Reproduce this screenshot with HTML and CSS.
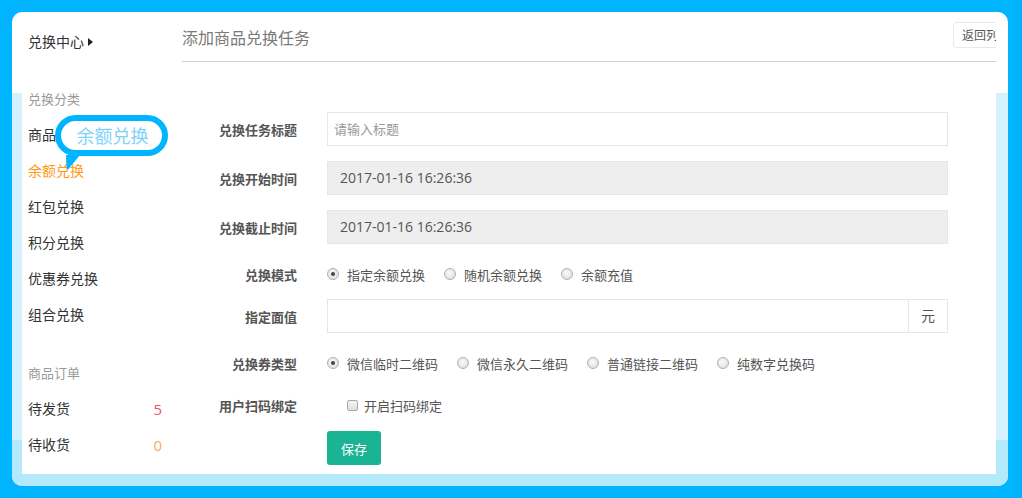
FILE: index.html
```html
<!DOCTYPE html>
<html lang="zh-CN">
<head>
<meta charset="utf-8">
<title>添加商品兑换任务</title>
<link rel="stylesheet" href="styles.css">
</head>
<body>
<div class="card">
  <header class="header">
    <div class="crumb">兑换中心<span class="caret"></span></div>
    <div class="head-main">
      <div class="title-row">
        <h1 class="title">添加商品兑换任务</h1>
        <button class="back-btn" type="button">返回列表</button>
      </div>
    </div>
  </header>
  <div class="body">
    <div class="panel">
      <aside class="sidebar">
        <div class="side-title">兑换分类</div>
        <ul class="side-list">
          <li class="side-item">商品兑换</li>
          <li class="side-item active">余额兑换</li>
          <li class="side-item">红包兑换</li>
          <li class="side-item">积分兑换</li>
          <li class="side-item">优惠券兑换</li>
          <li class="side-item">组合兑换</li>
        </ul>
        <div class="side-title orders">商品订单</div>
        <ul class="side-list">
          <li class="side-item count-row"><span>待发货</span><span class="count red">5</span></li>
          <li class="side-item count-row"><span>待收货</span><span class="count orange">0</span></li>
        </ul>
        <div class="bubble">
          <span class="bubble-text">余额兑换</span>
          <svg class="bubble-tail" width="18" height="16" viewBox="0 0 18 16"><path d="M2 0 L2.5 13 Q3 15 5 13.5 L16 0 Z" fill="#00b4ff"/></svg>
        </div>
      </aside>
      <main class="form">
        <div class="row r1">
          <label class="lbl">兑换任务标题</label>
          <div class="field"><div class="input placeholder">请输入标题</div></div>
        </div>
        <div class="row r2">
          <label class="lbl">兑换开始时间</label>
          <div class="field"><div class="input disabled">2017-01-16 16:26:36</div></div>
        </div>
        <div class="row r3">
          <label class="lbl">兑换截止时间</label>
          <div class="field"><div class="input disabled">2017-01-16 16:26:36</div></div>
        </div>
        <div class="row r4">
          <label class="lbl">兑换模式</label>
          <div class="field radios">
            <span class="opt"><i class="radio on"></i>指定余额兑换</span>
            <span class="opt"><i class="radio"></i>随机余额兑换</span>
            <span class="opt"><i class="radio"></i>余额充值</span>
          </div>
        </div>
        <div class="row r5">
          <label class="lbl">指定面值</label>
          <div class="field"><div class="input-group"><div class="input grow"></div><div class="addon">元</div></div></div>
        </div>
        <div class="row r6">
          <label class="lbl">兑换券类型</label>
          <div class="field radios">
            <span class="opt"><i class="radio on"></i>微信临时二维码</span>
            <span class="opt"><i class="radio"></i>微信永久二维码</span>
            <span class="opt"><i class="radio"></i>普通链接二维码</span>
            <span class="opt"><i class="radio"></i>纯数字兑换码</span>
          </div>
        </div>
        <div class="row r7">
          <label class="lbl">用户扫码绑定</label>
          <div class="field check"><i class="checkbox"></i>开启扫码绑定</div>
        </div>
        <div class="row r8">
          <span class="lbl"></span>
          <div class="field"><button class="save" type="button">保存</button></div>
        </div>
      </main>
    </div>
  </div>
</div>
</body>
</html>
```
FILE: styles.css
```css
* { box-sizing: border-box; }
html, body { margin: 0; }
body {
  background: #00b4ff;
  padding: 12px;
  font-family: "Open Sans", "Noto Sans CJK SC", sans-serif;
  color: #333;
  width: 1022px;
  height: 498px;
  overflow: hidden;
}
.card {
  width: 996px;
  height: 474px;
  border-radius: 10px;
  background: #fff;
  overflow: hidden;
  display: flex;
  flex-direction: column;
}
.header {
  height: 81px;
  display: flex;
  align-items: flex-start;
  flex-shrink: 0;
}
.crumb {
  width: 170px;
  padding-left: 16px;
  margin-top: 20px;
  font-size: 14px;
  line-height: 20px;
  height: 20px;
  color: #333;
  display: flex;
  align-items: center;
}
.caret {
  display: inline-block;
  width: 0; height: 0;
  border-top: 4px solid transparent;
  border-bottom: 4px solid transparent;
  border-left: 5px solid #222;
  margin-left: 4px;
}
.head-main {
  flex: 1;
  margin-right: 12px;
  overflow: hidden;
}
.title-row {
  height: 50px;
  border-bottom: 1px solid #cfcfcf;
  display: flex;
  align-items: flex-start;
  padding-top: 10px;
}
.title {
  flex: 1;
  margin: 0;
  font-size: 16px;
  font-weight: normal;
  line-height: 32px;
  color: #7a7a7a;
}
.back-btn {
  flex-shrink: 0;
  height: 26px;
  width: 66px;
  margin-right: -23px;
  padding: 0 0 0 8px;
  text-align: left;
  white-space: nowrap;
  border: 1px solid #e7eaec;
  border-radius: 3px;
  background: #fff;
  font-family: inherit;
  font-size: 12px;
  color: #555;
}
.body {
  flex: 1;
  display: flex;
  padding: 0 12px 12px 10px;
  background: linear-gradient(to bottom, #d4f1fd 347px, #b4e9fc 347px);
}
.panel {
  flex: 1;
  display: flex;
  background: #fff;
}
.sidebar {
  width: 160px;
  flex-shrink: 0;
  padding-left: 6px;
  padding-right: 20px;
  position: relative;
}
.side-title {
  font-size: 13px;
  line-height: 12px;
  color: #9a9a9a;
  margin-bottom: 12px;
}
.side-title.orders { margin-top: 34px; }
.side-list { list-style: none; margin: 0; padding: 0; }
.side-item {
  font-size: 14px;
  line-height: 36px;
  height: 36px;
  color: #333;
}
.side-item.active { color: #ff9a14; }
.count-row { display: flex; justify-content: space-between; }
.count { font-size: 15px; }
.count.red { color: #ed5565; }
.count.orange { color: #f8ac59; }
.bubble {
  position: absolute;
  left: 33px;
  top: 22px;
  width: 113px;
  height: 41px;
  border: 6px solid #00b4ff;
  border-radius: 21px;
  background: #fff;
  display: flex;
  align-items: center;
  justify-content: center;
}
.bubble-text {
  font-size: 18px;
  color: #7fd3f8;
  line-height: 20px;
  margin-left: 2px;
}
.bubble-tail {
  position: absolute;
  left: 3px;
  top: 34px;
}
.form {
  flex: 1;
  padding-top: 19px;
  padding-right: 48px;
}
.row {
  display: flex;
  align-items: center;
}
.lbl {
  width: 115px;
  flex-shrink: 0;
  text-align: right;
  margin-right: 30px;
  font-size: 13px;
  font-weight: bold;
  color: #555;
}
.field { flex: 1; }
.r1, .r2, .r3, .r5 { height: 34px; }
.r2, .r3 { margin-top: 15px; }
.r4 { height: 32px; margin-top: 14px; }
.r5 { margin-top: 9px; }
.r6 { height: 32px; margin-top: 14px; }
.r7 { height: 33px; margin-top: 10px; }
.r8 { height: 34px; margin-top: 9px; }
.input {
  height: 34px;
  border: 1px solid #e5e6e7;
  background: #fff;
  font-size: 14px;
  line-height: 32px;
  padding: 0 12px;
  color: #555;
}
.input.placeholder { color: #999; font-size: 13px; padding-left: 6px; }
.input.disabled { background: #eeeeee; }
.input-group { display: flex; height: 34px; }
.input.grow { flex: 1; }
.addon {
  width: 39px;
  height: 34px;
  border: 1px solid #e5e6e7;
  border-left: 0;
  font-size: 14px;
  line-height: 32px;
  text-align: center;
  color: #555;
}
.radios {
  display: flex;
  align-items: center;
  font-size: 13px;
  color: #555;
}
.opt {
  display: inline-flex;
  align-items: center;
  margin-right: 19px;
}
.radio {
  width: 12px;
  height: 12px;
  border-radius: 50%;
  border: 1px solid #b0b0b0;
  background: radial-gradient(circle at 45% 40%, #fafafa 0, #e2e2e2 70%, #d0d0d0 100%);
  margin-right: 8px;
  position: relative;
  flex-shrink: 0;
}
.radio.on::after {
  content: "";
  position: absolute;
  left: 3px; top: 3px;
  width: 4px; height: 4px;
  border-radius: 50%;
  background: #444;
}
.check {
  display: flex;
  align-items: center;
  padding-left: 20px;
  font-size: 13px;
  color: #555;
}
.checkbox {
  width: 11px;
  height: 11px;
  border: 1px solid #a8a8a8;
  border-radius: 2px;
  background: linear-gradient(#f4f4f4, #dedede);
  margin-right: 6px;
}
.save {
  height: 34px;
  width: 54px;
  border: 0;
  border-radius: 3px;
  background: #1ab394;
  color: #fff;
  font-family: inherit;
  font-size: 13px;
}
```
